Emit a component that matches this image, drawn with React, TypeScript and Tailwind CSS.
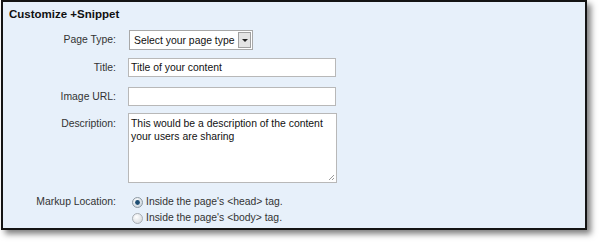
export default function App() {
  const font = { fontFamily: '"Liberation Sans", Arial, sans-serif' };
  return (
    <div className="w-[599px] h-[242px] bg-white" style={font}>
      <div className="ml-[1px] w-[586px] h-[230px] border-2 border-[#141414] bg-[#e7f0fa] shadow-[4px_4px_6px_rgba(0,0,0,0.5)] text-[10.4px] text-[#333]">
        <div className="pl-[6px] pt-[5px] h-[21px] leading-[14px] text-[11.5px] font-bold text-[#111]">
          Customize +Snippet
        </div>

        <div className="grid grid-cols-[113px_1fr] gap-x-[12px] mt-[7px]">
          <div className="h-[20px] flex items-center justify-end">Page Type:</div>
          <div className="h-[20px] w-[124px] ml-[1px] flex items-center border border-[#a8a8a8] bg-white pl-[4px] pr-[1px] text-[#111]">
            <span className="flex-1 leading-[13px]">Select your page type</span>
            <span className="w-[13px] h-[16px] border border-[#a0a0a0] bg-[#e4e4e4] flex items-center justify-center">
              <svg width="6" height="3" viewBox="0 0 6 3">
                <path d="M0 0h6L3 3z" fill="#222" />
              </svg>
            </span>
          </div>

          <div className="mt-[8px] h-[19px] flex items-center justify-end">Title:</div>
          <div className="mt-[8px] h-[19px] w-[208px] border border-[#b8b8b8] bg-white flex items-center pl-[2px] text-[#111]">
            Title of your content
          </div>

          <div className="mt-[10px] h-[19px] flex items-center justify-end">Image URL:</div>
          <div className="mt-[10px] h-[19px] w-[208px] border border-[#b8b8b8] bg-white" />

          <div className="mt-[7px] pt-[4px] leading-[13px] text-right">Description:</div>
          <div className="mt-[7px] relative h-[70px] w-[209px] border border-[#b8b8b8] bg-white pt-[3px] pl-[2px] pr-[4px] leading-[13px] text-[#111]">
            This would be a description of the content your users are sharing
            <svg className="absolute right-[1px] bottom-[1px]" width="8" height="8" viewBox="0 0 8 8">
              <path d="M7 2L2 7M7 5L5 7" stroke="#9a9a9a" strokeWidth="1" />
            </svg>
          </div>

          <div className="mt-[11px] h-[16px] flex items-center justify-end">Markup Location:</div>
          <div className="mt-[11px] flex flex-col">
            <label className="h-[16px] flex items-center gap-[3px] ml-[4px]">
              <svg width="11" height="11" viewBox="0 0 11 11">
                <defs>
                  <radialGradient id="rg1" cx="0.4" cy="0.35" r="0.7">
                    <stop offset="0" stopColor="#ffffff" />
                    <stop offset="1" stopColor="#c9d3dc" />
                  </radialGradient>
                </defs>
                <circle cx="5.5" cy="5.5" r="5" fill="url(#rg1)" stroke="#8f9aa3" />
                <circle cx="5.5" cy="5.5" r="2.4" fill="#1d4d73" />
              </svg>
              <span>Inside the page's &lt;head&gt; tag.</span>
            </label>
            <label className="h-[16px] flex items-center gap-[3px] ml-[4px]">
              <svg width="11" height="11" viewBox="0 0 11 11">
                <defs>
                  <radialGradient id="rg2" cx="0.4" cy="0.35" r="0.7">
                    <stop offset="0" stopColor="#ffffff" />
                    <stop offset="1" stopColor="#d4d8dc" />
                  </radialGradient>
                </defs>
                <circle cx="5.5" cy="5.5" r="5" fill="url(#rg2)" stroke="#a7adb3" />
              </svg>
              <span>Inside the page's &lt;body&gt; tag.</span>
            </label>
          </div>
        </div>
      </div>
    </div>
  );
}
